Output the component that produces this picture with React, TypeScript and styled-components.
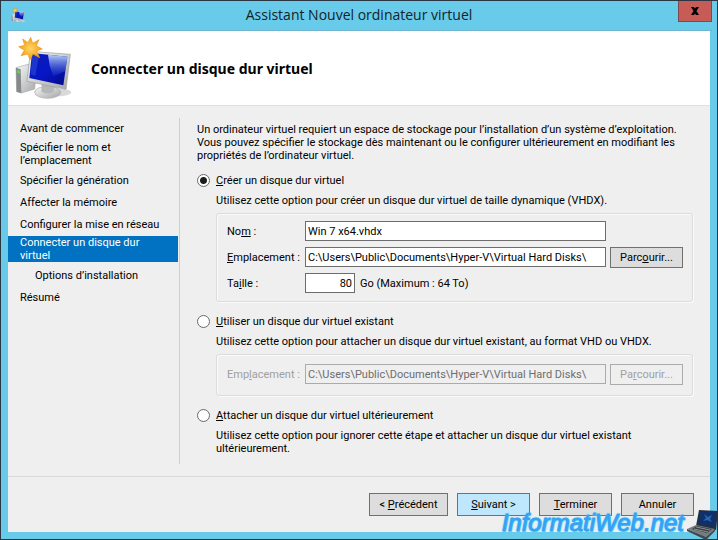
import React from "react";
import styled, { createGlobalStyle, css } from "styled-components";

const GlobalStyle = createGlobalStyle`
  *, *::before, *::after { box-sizing: border-box; }
  body { margin: 0; background: #68cbea; }
  body, button, input { font-family: Roboto, "Liberation Sans", sans-serif; font-size: 11px; line-height: 13px; color: #000; }
`;

const Dialog = styled.div`
  position: relative;
  min-height: 100vh;
  display: flex;
  flex-direction: column;
  background: #68cbea;
  border: 1px solid #2b3644;
  padding: 0 7px 7px;
`;

const TitleBar = styled.div`
  display: flex;
  align-items: flex-start;
  justify-content: space-between;
  height: 30px;
  margin-right: -2px;
  border-bottom: 1px solid #6fb5cf;
`;

const TitleIcon = styled.span`
  display: flex;
  width: 32px;
  padding: 6px 0 0 3px;
`;

const Title = styled.h1`
  margin: 0;
  padding-top: 4px;
  font: 400 14px/20px "Open Sans", "Noto Sans", sans-serif;
  color: #14232b;
`;

const CloseButton = styled.button`
  display: flex;
  align-items: center;
  justify-content: center;
  width: 34px;
  height: 21px;
  padding: 0;
  border: 1px solid #7d4a50;
  border-top: 0;
  background: #c75c57;
`;

const Body = styled.div`
  flex: 1;
  display: flex;
  flex-direction: column;
  background: #efefef;
`;

const Header = styled.header`
  display: flex;
  align-items: center;
  gap: 19px;
  height: 75px;
  padding: 0 6px;
  background: #fff;
  border-bottom: 1px solid #dfdfdf;
`;

const Heading = styled.h2`
  margin: 0;
  padding-top: 2px;
  font: 700 14px/20px "Noto Sans", "Open Sans", sans-serif;
`;

const Main = styled.div`
  flex: 1;
  display: flex;
  padding: 12px 0;
`;

const Steps = styled.nav`
  width: 172px;
  padding-right: 1px;
  border-right: 1px solid #cfcfcf;
`;

const Step = styled.a<{ $current?: boolean; $double?: boolean; $sub?: boolean }>`
  display: block;
  padding: ${p => (p.$double ? "0" : "4px")} 0 ${p => (p.$double ? "0" : "5px")} ${p => (p.$sub ? "27px" : "12px")};
  color: #000;
  text-decoration: none;
  ${p => p.$double && css`margin: 1px 0 3px;`}
  ${p => p.$current && css`margin-top: 0; background: #0072c1; color: #fff;`}
`;

const Content = styled.main`
  flex: 1;
  min-width: 0;
  padding: 5px 17px 0 17px;
`;

const Text = styled.p<{ $indent?: boolean }>`
  max-width: 480px;
  margin: 0;
  padding-left: ${p => (p.$indent ? "19px" : "0")};
`;

const Option = styled.section`
  margin-top: 12px;
  & + & { margin-top: 13px; }
`;

const RadioLabel = styled.label`
  display: flex;
  align-items: center;
  gap: 6px;
  margin-bottom: 7px;
`;

const Radio = styled.input`
  appearance: none;
  width: 13px;
  height: 13px;
  margin: 0;
  border: 1px solid #6a6a6a;
  border-radius: 50%;
  background: #fff;
  &:checked { background: radial-gradient(circle, #1c1c1c 0 3px, #fff 4px); }
`;

const Group = styled.div<{ $compact?: boolean }>`
  display: grid;
  grid-template-columns: 74px minmax(0, 1fr) 73px;
  grid-auto-rows: 20px;
  gap: 6px 4px;
  margin: 6px 0 0 19px;
  padding: ${p => (p.$compact ? "9px 9px 11px 10px" : "7px 9px 8px 10px")};
  border: 1px solid #dcdcdc;
  border-radius: 3px;
  box-shadow: inset 1px 1px 0 #fafafa, 1px 1px 0 #fafafa;
`;

const FieldLabel = styled.label<{ $disabled?: boolean }>`
  align-self: center;
  white-space: nowrap;
  color: ${p => (p.$disabled ? "#a0a0a0" : "#000")};
`;

const Field = styled.input`
  grid-column: 2;
  width: 100%;
  height: 20px;
  padding: 0 2px;
  border: 1px solid #6d6d6d;
  border-radius: 0;
  background: #fff;
  &:disabled { background: #efefef; border-color: #ababab; color: #6d6d6d; }
`;

const SizeLine = styled.div`
  display: flex;
  align-items: center;
  gap: 5px;
`;

const SizeField = styled(Field)`
  width: 50px;
  text-align: right;
`;

const Button = styled.button<{ $primary?: boolean }>`
  height: 23px;
  min-width: 73px;
  padding: 0 8px;
  border: 1px solid ${p => (p.$primary ? "#3c7fb1" : "#707070")};
  border-radius: 0;
  background: ${p => (p.$primary ? "#bee6fd" : "#dddddd")};
  &:disabled { background: #efefef; border-color: #ababab; color: #a0a0a0; }
`;

const BrowseButton = styled(Button)`
  height: 21px;
  padding: 0 5px;
`;

const WideButton = styled(Button)`
  min-width: 79px;
`;

const Footer = styled.footer`
  display: flex;
  justify-content: flex-end;
  gap: 9px;
  padding: 16px 16px;
  border-top: 1px solid #d9d9d9;
`;

const Watermark = styled.div`
  position: absolute;
  right: -1px;
  bottom: -1px;
  display: flex;
  align-items: flex-start;
  gap: 3px;
  font: italic 400 24px/28px "Liberation Sans", Arial, sans-serif;
  color: #3a9df2;
  -webkit-text-stroke: 1px #35a6f5;
  text-shadow: 0 0 2px #3fd0fb, 1px 1px 1px #5ed6fa;
  pointer-events: none;
`;

const ComputerIcon = ({ width, height, id }: { width: number; height: number; id: string }) => (
  <svg width={width} height={height} viewBox="42 100 174 198" aria-hidden="true">
    <defs>
      <linearGradient id={`${id}-screen`} x1="0" y1="0" x2="1" y2="1">
        <stop offset="0" stopColor="#0a1cae" />
        <stop offset="0.5" stopColor="#0716c8" />
        <stop offset="1" stopColor="#020b86" />
      </linearGradient>
      <linearGradient id={`${id}-glare`} x1="0.5" y1="0" x2="0.5" y2="1">
        <stop offset="0" stopColor="#b9d0f4" />
        <stop offset="1" stopColor="#2140c8" stopOpacity="0.3" />
      </linearGradient>
      <linearGradient id={`${id}-metal`} x1="0" y1="0" x2="1" y2="1">
        <stop offset="0" stopColor="#fafafa" />
        <stop offset="1" stopColor="#a3a5a7" />
      </linearGradient>
      <radialGradient id={`${id}-star`}>
        <stop offset="0" stopColor="#ffd765" />
        <stop offset="1" stopColor="#f49b16" />
      </radialGradient>
    </defs>
    <ellipse cx="166" cy="272" rx="48" ry="12" fill="#d9d9d9" />
    <path d="M48 198L84 188L110 200L104 262L64 274L50 270Z" fill={`url(#${id}-metal)`} stroke="#aaa" strokeWidth="2" />
    <path d="M48 198L62 203L64 274L50 270Z" fill="#85898b" />
    <path d="M51 204L59 207L60 216L51 213Z" fill="#52df3d" />
    <ellipse cx="143" cy="272" rx="39" ry="18" fill={`url(#${id}-metal)`} stroke="#a9a9a9" strokeWidth="2" />
    <path d="M125 246L164 252L160 272Q142 280 124 270Z" fill="#b5b7b9" />
    <path d="M91 149L211 158L198 263L81 239Z" fill={`url(#${id}-metal)`} stroke="#9b9da0" strokeWidth="2" />
    <path d="M96 154L202 165L190 251L88 229Z" fill={`url(#${id}-screen)`} />
    <path d="M144 159L202 165L196 208L160 224L149 192Z" fill={`url(#${id}-glare)`} />
    <path d="M97 155L118 157L106 222L92 218Z" fill="#3151dc" opacity="0.5" />
    <path
      d="M92 107L98 125L117 114L109 132L127 142L109 148L119 168L99 157L90 174L83 157L63 162L73 146L56 135L74 131L68 112L84 123Z"
      fill={`url(#${id}-star)`} stroke="#e99a24" strokeWidth="2"
    />
  </svg>
);

const LaptopIcon = () => (
  <svg width="31" height="31" viewBox="0 0 31 31" aria-hidden="true">
    <path d="M12 1L31 2L29 21L9 17Z" fill="#25303d" />
    <path d="M13 2L29 3L27 18L11 15Z" fill="#103069" />
    <path d="M17 5L21 8L25 6L23 10L25 13L20 11L16 12L19 9Z" fill="#2466b4" />
    <path d="M9 16L28 20L19 28L0 20Z" fill="#777c80" />
    <path d="M10 17L25 20L20 24L5 20Z" fill="#3a3e43" />
    <path d="M7 20L21 23M9 18L23 21" stroke="#8b9094" />
    <path d="M0 20L19 28L28 20L28 22L19 31L0 22Z" fill="#42474c" />
  </svg>
);

const path = "C:\\Users\\Public\\Documents\\Hyper-V\\Virtual Hard Disks\\";

export default function App() {
  return (
    <>
      <GlobalStyle />
      <Dialog>
        <TitleBar>
          <TitleIcon><ComputerIcon width={14} height={16} id="small" /></TitleIcon>
          <Title>Assistant Nouvel ordinateur virtuel</Title>
          <CloseButton aria-label="Fermer">
            <svg width="10" height="8" viewBox="0 0 10 8" aria-hidden="true">
              <path d="M1 0H4L9 8H6ZM6 0H9L4 8H1Z" fill="#000" />
            </svg>
          </CloseButton>
        </TitleBar>
        <Body>
          <Header>
            <ComputerIcon width={58} height={66} id="large" />
            <Heading>Connecter un disque dur virtuel</Heading>
          </Header>
          <Main>
            <Steps>
              <Step href="#avant">Avant de commencer</Step>
              <Step href="#nom" $double>Spécifier le nom et<br />l’emplacement</Step>
              <Step href="#generation">Spécifier la génération</Step>
              <Step href="#memoire">Affecter la mémoire</Step>
              <Step href="#reseau">Configurer la mise en réseau</Step>
              <Step href="#disque" $double $current aria-current="step">Connecter un disque dur<br />virtuel</Step>
              <Step href="#options" $sub>Options d’installation</Step>
              <Step href="#resume">Résumé</Step>
            </Steps>
            <Content>
              <Text>
                Un ordinateur virtuel requiert un espace de stockage pour l’installation d’un système d’exploitation.
                Vous pouvez spécifier le stockage dès maintenant ou le configurer ultérieurement en modifiant les
                propriétés de l’ordinateur virtuel.
              </Text>
              <Option>
                <RadioLabel>
                  <Radio type="radio" name="disk" defaultChecked />
                  <span><u>C</u>réer un disque dur virtuel</span>
                </RadioLabel>
                <Text $indent>Utilisez cette option pour créer un disque dur virtuel de taille dynamique (VHDX).</Text>
                <Group>
                  <FieldLabel htmlFor="name">No<u>m</u> :</FieldLabel>
                  <Field id="name" defaultValue="Win 7 x64.vhdx" />
                  <span />
                  <FieldLabel htmlFor="location"><u>E</u>mplacement :</FieldLabel>
                  <Field id="location" defaultValue={path} />
                  <BrowseButton>Parc<u>o</u>urir...</BrowseButton>
                  <FieldLabel htmlFor="size">Ta<u>i</u>lle :</FieldLabel>
                  <SizeLine>
                    <SizeField id="size" defaultValue="80" />
                    <span>Go (Maximum : 64 To)</span>
                  </SizeLine>
                </Group>
              </Option>
              <Option>
                <RadioLabel>
                  <Radio type="radio" name="disk" />
                  <span><u>U</u>tiliser un disque dur virtuel existant</span>
                </RadioLabel>
                <Text $indent>Utilisez cette option pour attacher un disque dur virtuel existant, au format VHD ou VHDX.</Text>
                <Group $compact>
                  <FieldLabel htmlFor="existing" $disabled>Emp<u>l</u>acement :</FieldLabel>
                  <Field id="existing" defaultValue={path} disabled />
                  <BrowseButton disabled>Pa<u>r</u>courir...</BrowseButton>
                </Group>
              </Option>
              <Option>
                <RadioLabel>
                  <Radio type="radio" name="disk" />
                  <span><u>A</u>ttacher un disque dur virtuel ultérieurement</span>
                </RadioLabel>
                <Text $indent>Utilisez cette option pour ignorer cette étape et attacher un disque dur virtuel existant ultérieurement.</Text>
              </Option>
            </Content>
          </Main>
          <Footer>
            <WideButton>&lt; <u>P</u>récédent</WideButton>
            <Button $primary><u>S</u>uivant &gt;</Button>
            <Button><u>T</u>erminer</Button>
            <Button>Annuler</Button>
          </Footer>
        </Body>
        <Watermark><span>InformatiWeb.net</span><LaptopIcon /></Watermark>
      </Dialog>
    </>
  );
}
